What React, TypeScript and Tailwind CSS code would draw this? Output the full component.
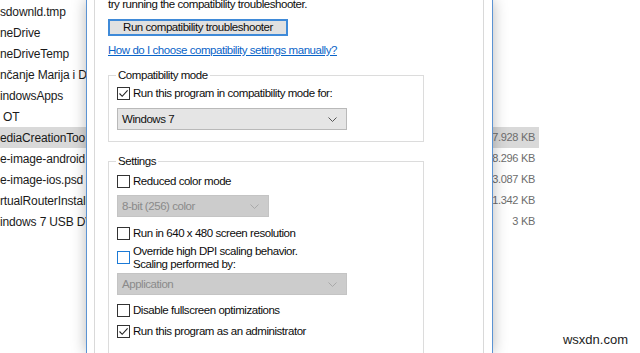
import { ReactNode } from 'react'

const FILES = [
  { name: 'sdownld.tmp', size: '' },
  { name: 'neDrive', size: '' },
  { name: 'neDriveTemp', size: '' },
  { name: 'nčanje Marija i D', size: '' },
  { name: 'indowsApps', size: '' },
  { name: 'OT', size: '', pad: true },
  { name: 'ediaCreationToo', size: '17.928 KB', active: true },
  { name: 'e-image-android', size: '18.296 KB' },
  { name: 'e-image-ios.psd', size: '13.087 KB' },
  { name: 'rtualRouterInstall', size: '11.342 KB' },
  { name: 'indows 7 USB DV', size: '3 KB' },
]

function Check({ checked, hover }: { checked?: boolean; hover?: boolean }) {
  return (
    <span
      className={`w-[13px] h-[13px] shrink-0 bg-white border flex items-center justify-center ${
        hover ? 'border-[#1c7ad6]' : 'border-[#333333]'
      }`}
    >
      {checked && (
        <svg width="11" height="11" viewBox="0 0 11 11" fill="none" stroke="#222" strokeWidth="1.1">
          <path d="M1.5 5.5 L4.2 8.3 L9.6 2.4" />
        </svg>
      )}
    </span>
  )
}

function CheckRow({ checked, hover, children, className = '' }: { checked?: boolean; hover?: boolean; children: ReactNode; className?: string }) {
  return (
    <div className={`flex items-center gap-[3px] h-[13px] ${className}`}>
      <Check checked={checked} hover={hover} />
      <span className="leading-[13px]">{children}</span>
    </div>
  )
}

function Select({ value, width, disabled, className = '' }: { value: string; width: string; disabled?: boolean; className?: string }) {
  return (
    <div
      className={`${width} h-[22px] flex items-center justify-between pl-[4px] pr-[9px] border ${
        disabled ? 'bg-[#cccccc] border-[#c4c4c4] text-[#8a8a8a]' : 'bg-[#e5e5e5] border-[#b9b9b9] text-[#111]'
      } ${className}`}
    >
      <span className="leading-[13px]">{value}</span>
      <svg width="9" height="5" viewBox="0 0 9 5" fill="none" stroke={disabled ? '#a9a9a9' : '#555'} strokeWidth="1">
        <path d="M0.5 0.5 L4.5 4.5 L8.5 0.5" />
      </svg>
    </div>
  )
}

function Group({ label, children, className = '' }: { label: string; children: ReactNode; className?: string }) {
  return (
    <div className={`relative w-[316px] border border-[#dcdcdc] pl-[8px] ${className}`}>
      <span className="absolute left-[7px] -top-[7px] px-[2px] bg-white leading-[13px]">{label}</span>
      {children}
    </div>
  )
}

export default function App() {
  return (
    <div className="relative w-[640px] h-[353px] overflow-hidden bg-white font-['Liberation_Sans',Arial,sans-serif]">

      {/* explorer list behind the dialog */}
      <div className="pt-[1px] text-[12px] tracking-[-0.15px] text-[#1a1a1a]">
        {FILES.map((f) => (
          <div
            key={f.name}
            className={`w-[539px] h-[21px] flex items-center justify-between pr-[4px] ${f.active ? 'bg-[#d9d9d9]' : ''}`}
          >
            <span className={f.pad ? 'pl-[3px]' : ''}>{f.name}</span>
            <span className="text-[11px] tracking-[-0.3px] text-[#6d6d6d]">{f.size}</span>
          </div>
        ))}
      </div>

      {/* watermark */}
      <div className="absolute right-[12px] bottom-[4px] text-[13px] text-[#222]">wsxdn.com</div>

      {/* properties dialog */}
      <div className="absolute left-[86px] top-0 w-[407px] h-[353px] bg-white border-x border-[#5b93d3] shadow-[0_0_14px_rgba(0,0,0,0.28)] flex">
        <div className="ml-[7px] w-[390px] h-full border-x border-[#d9d9d9] pl-[13px] flex flex-col text-[11.5px] tracking-[-0.45px] text-[#0d0d0d]">
          <div className="-mt-[2px] leading-[13px]">try running the compatibility troubleshooter.</div>

          <button className="mt-[8px] w-[180px] h-[20px] border-2 border-[#3f8ad8] bg-[#e1e1e1] leading-[13px] flex items-center justify-center">
            Run compatibility troubleshooter
          </button>

          <a className="mt-[8px] leading-[13px] text-[#0a64c8] underline underline-offset-[1px]">
            How do I choose compatibility settings manually?
          </a>

          <Group label="Compatibility mode" className="mt-[18px] pt-[11px] pb-[11px]">
            <CheckRow checked>Run this program in compatibility mode for:</CheckRow>
            <Select value="Windows 7" width="w-[230px]" className="mt-[8px]" />
          </Group>

          <Group label="Settings" className="mt-[19px] pt-[13px] pb-[20px]">
            <CheckRow>Reduced color mode</CheckRow>
            <Select value="8-bit (256) color" width="w-[152px]" disabled className="mt-[7px]" />
            <CheckRow className="mt-[10px]">Run in 640 x 480 screen resolution</CheckRow>
            <div className="mt-[5px] flex items-start gap-[3px]">
              <span className="mt-[6px]"><Check hover /></span>
              <span className="leading-[13px]">
                Override high DPI scaling behavior.<br />Scaling performed by:
              </span>
            </div>
            <Select value="Application" width="w-[230px]" disabled className="mt-[2px]" />
            <CheckRow className="mt-[9px]">Disable fullscreen optimizations</CheckRow>
            <CheckRow checked className="mt-[8px]">Run this program as an administrator</CheckRow>
          </Group>
        </div>
      </div>
    </div>
  )
}
